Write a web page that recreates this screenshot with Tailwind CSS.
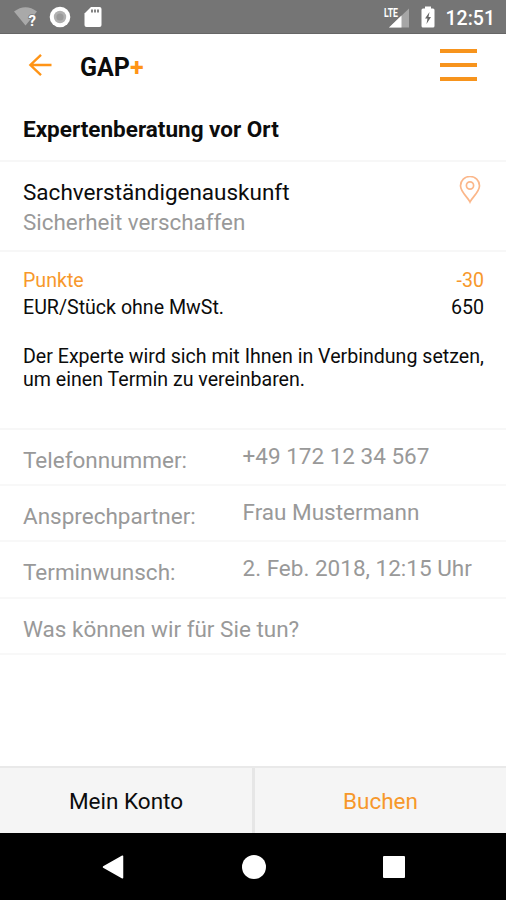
<!DOCTYPE html>
<html lang="de">
<head>
  <meta charset="UTF-8" />
  <meta name="viewport" content="width=device-width, initial-scale=1.0" />
  <title>GAP+ Expertenberatung</title>
  <script src="https://cdn.jsdelivr.net/npm/@tailwindcss/browser@4"></script>
</head>
<body class="bg-white text-[#0c0c0c] font-['Roboto',sans-serif] text-[22.5px]">
  <div class="w-[506px] h-[900px] flex flex-col overflow-hidden">

    <!-- Statusleiste -->
    <div class="h-[34px] shrink-0 bg-[#757575] border-b border-[#666] flex items-center justify-between pl-[13px] pr-[11px] text-white">
      <div class="flex items-center">
        <svg class="w-[26px] h-[24px]" viewBox="0 0 26 24">
          <path d="M1 6.500 Q12.500 -2 24 6.500 L12.500 20.500 Z" fill="#a9a9a9" />
          <text x="15.500" y="20.500" font-size="15" font-weight="700" fill="#fff" stroke="#757575" stroke-width="1.500" paint-order="stroke">?</text>
        </svg>
        <svg class="w-[22px] h-[22px] ml-[10px]" viewBox="0 0 22 22">
          <circle cx="11" cy="11" r="10.300" fill="#fff" />
          <circle cx="11" cy="11" r="6.200" fill="#b0b0b0" />
          <circle cx="11" cy="11" r="3.600" fill="#9a9a9a" />
        </svg>
        <svg class="w-[18px] h-[22px] ml-[13px]" viewBox="0 0 18 22">
          <path d="M7 1 H15.500 Q17.500 1 17.500 3 V19 Q17.500 21 15.500 21 H2.500 Q0.500 21 0.500 19 V7.500 Z" fill="#fff" />
          <path d="M8 3.500 V6.500 M11 3.500 V6.500 M14 3.500 V6.500" stroke="#777" stroke-width="1.800" />
        </svg>
      </div>
      <div class="flex items-center">
        <svg class="w-[27px] h-[24px]" viewBox="0 0 27 24">
          <path d="M26 3.500 V22.500 H6 Z" fill="#a6a6a6" />
          <path d="M18.500 10.500 V22.500 H6 Z" fill="#fff" />
          <text x="1" y="11.500" font-size="12" font-weight="700" fill="#fff" stroke="#757575" stroke-width="1.500" paint-order="stroke" textLength="14" lengthAdjust="spacingAndGlyphs">LTE</text>
        </svg>
        <svg class="w-[14px] h-[22px] ml-[11px]" viewBox="0 0 14 22">
          <path d="M4 0.500 H10 V2.500 H12 Q13.500 2.500 13.500 4 V20 Q13.500 21.500 12 21.500 H2 Q0.500 21.500 0.500 20 V4 Q0.500 2.500 2 2.500 H4 Z" fill="#fff" />
          <path d="M8.500 6 L4 12.500 H6.500 L5.500 18 L10 11 H7.500 Z" fill="#666" />
        </svg>
        <span class="ml-[11px] text-[19.5px] font-medium leading-[24px] relative top-[2px]">12:51</span>
      </div>
    </div>

    <!-- Kopfzeile -->
    <header class="h-[64px] shrink-0 flex items-center pl-[28px] pr-[29px]">
      <svg class="w-[24px] h-[24px] mb-[2px]" viewBox="0 0 24 24" fill="none" stroke="#ff9416" stroke-width="2.400">
        <path d="M13 1.800 L2.400 12 L13 22.200 M2.400 12 H23.500" />
      </svg>
      <div class="ml-[28px] text-[25px] font-bold leading-[30px] pt-[3px]">GAP<span class="text-[#ff9416]">+</span></div>
      <div class="ml-auto mb-[2px] w-[37px] flex flex-col gap-[10px]">
        <div class="h-[4px] bg-[#f7941d]"></div>
        <div class="h-[4px] bg-[#f7941d]"></div>
        <div class="h-[4px] bg-[#f7941d]"></div>
      </div>
    </header>

    <h1 class="h-[64px] shrink-0 px-[23px] border-b-2 border-[#f7f7f7] font-bold leading-[63px]"><span>Expertenberatung vor Ort</span></h1>

    <!-- Leistung -->
    <section class="h-[90px] shrink-0 px-[23px] pt-[15px] border-b-2 border-[#f7f7f7] flex justify-between leading-[31px]">
      <div>
        <div><span>Sachverständigenauskunft</span></div>
        <div class="text-[#999] -mt-px text-[22.4px]"><span>Sicherheit verschaffen</span></div>
      </div>
      <svg class="w-[22px] h-[28px] mr-[2px] -mt-px" viewBox="0 0 22 28" fill="none" stroke="#fbb78a" stroke-width="1.700">
        <path d="M11 26 C9 21.500 1.500 16 1.500 9.800 A9.500 9.300 0 0 1 20.500 9.800 C20.500 16 13 21.500 11 26 Z" />
        <circle cx="11" cy="9.500" r="3.600" />
      </svg>
    </section>

    <!-- Preis -->
    <section class="h-[178px] shrink-0 pl-[23px] pr-[22px] pt-[15px] border-b-2 border-[#f7f7f7] text-[19.6px] leading-[27px]">
      <div class="flex justify-between text-[#f7982b]"><span>Punkte</span><span>-30</span></div>
      <div class="flex justify-between"><span>EUR/Stück ohne MwSt.</span><span>650</span></div>
      <p class="mt-[24px] leading-[23px] whitespace-nowrap"><span>Der Experte wird sich mit Ihnen in Verbindung setzen,</span><br /><span>um einen Termin zu vereinbaren.</span></p>
    </section>

    <!-- Formular -->
    <section class="text-[#999] leading-[30px]">
      <div class="h-[56px] border-b-2 border-[#f8f8f8] pl-[23px] pt-[11px] flex">
        <span class="w-[219.5px] pt-[4px]"><span>Telefonnummer:</span></span><span>+49 172 12 34 567</span>
      </div>
      <div class="h-[56px] border-b-2 border-[#f8f8f8] pl-[23px] pt-[11px] flex">
        <span class="w-[219.5px] pt-[4px]"><span>Ansprechpartner:</span></span><span>Frau Mustermann</span>
      </div>
      <div class="h-[57px] border-b-2 border-[#f8f8f8] pl-[23px] pt-[11px] flex">
        <span class="w-[219.5px] pt-[4px]"><span>Terminwunsch:</span></span><span>2. Feb. 2018, 12:15 Uhr</span>
      </div>
      <div class="h-[56px] border-b-2 border-[#f8f8f8] pl-[23px] pt-[15px]"><span>Was können wir für Sie tun?</span></div>
    </section>

    <!-- Aktionen -->
    <footer class="mt-auto h-[67px] shrink-0 flex border-t-2 border-[#e9e9e9] bg-[#f5f5f5] leading-[67px] text-center">
      <div class="w-[252px]"><span>Mein Konto</span></div>
      <div class="w-[3px] bg-[#e6e6e6]"></div>
      <div class="flex-1 text-[#f7982b]"><span>Buchen</span></div>
    </footer>

    <!-- Navigationsleiste -->
    <nav class="h-[67px] shrink-0 bg-black flex items-center justify-between pl-[102px] pr-[101px]">
      <svg class="w-[22px] h-[24px]" viewBox="0 0 22 24"><path d="M1.500 12 L20.500 1.200 V22.800 Z" fill="#fff" stroke="#fff" stroke-width="1.500" stroke-linejoin="round" /></svg>
      <div class="w-[24px] h-[24px] rounded-full bg-white"></div>
      <div class="w-[22px] h-[22px] rounded-[1px] bg-white"></div>
    </nav>
  </div>
</body>
</html>
